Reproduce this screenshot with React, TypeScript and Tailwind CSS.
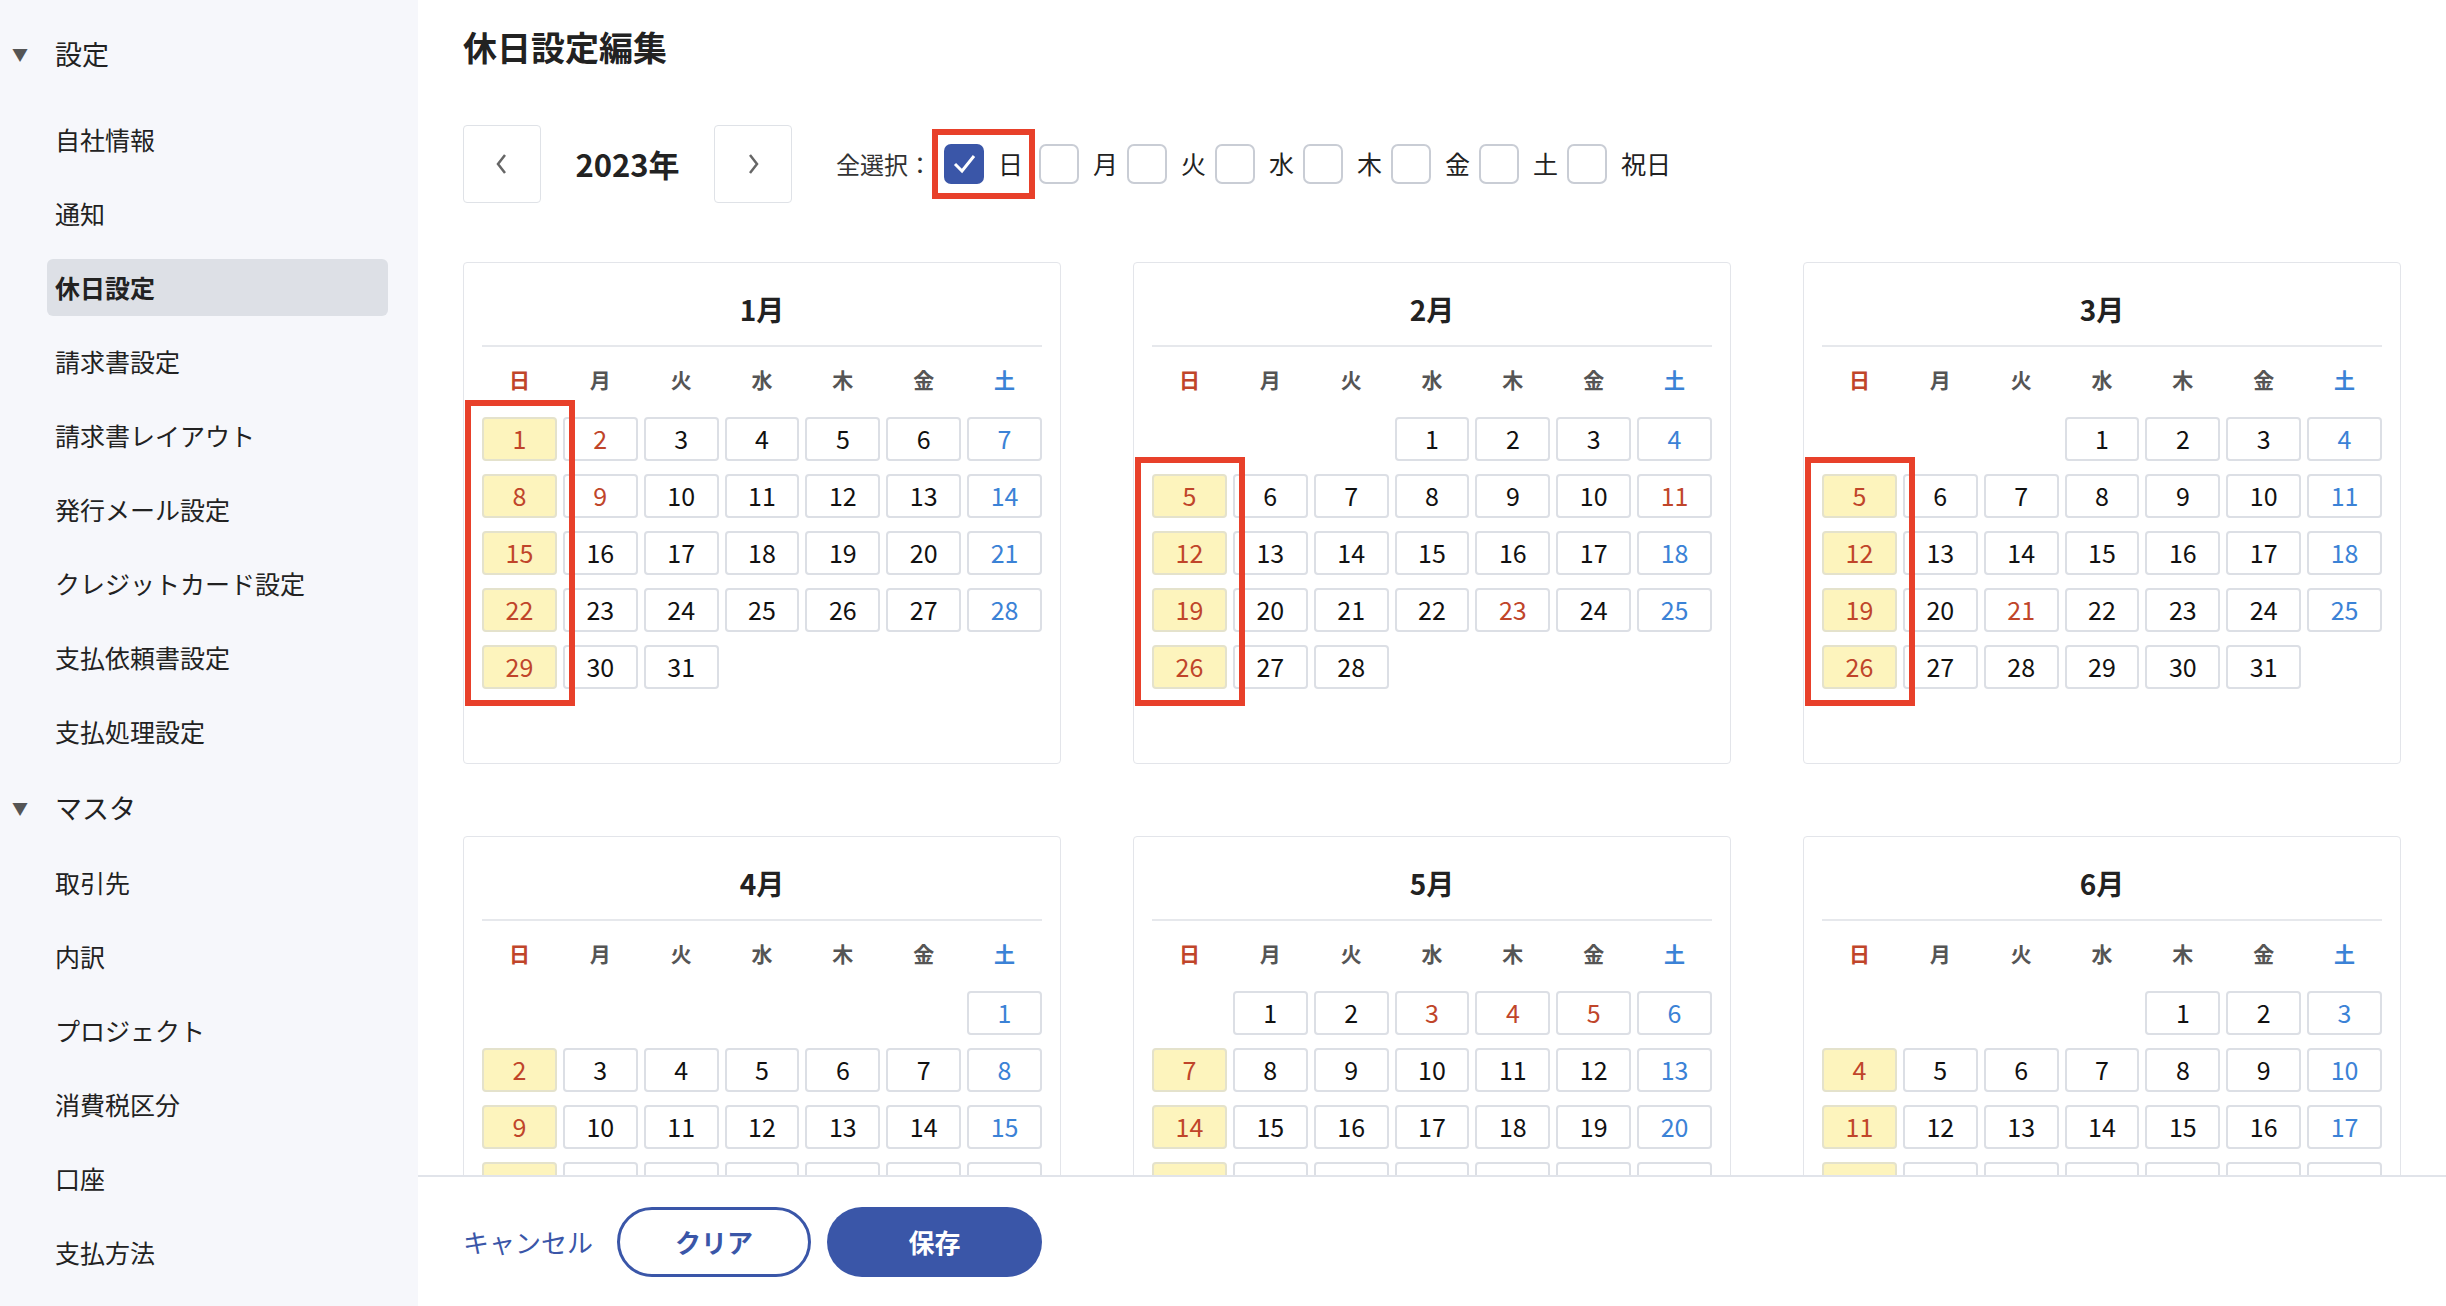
import React from "react";

const holidays: Record<string, number[]> = {
  "1": [1, 2, 9],
  "2": [11, 23],
  "3": [21],
  "4": [29],
  "5": [3, 4, 5],
  "6": [],
};

function Cal({ m, box }: { m: number; box: boolean }) {
  const first = new Date(2023, m - 1, 1).getDay();
  const days = new Date(2023, m, 0).getDate();
  const cells: (number | null)[] = [];
  for (let i = 0; i < first; i++) cells.push(null);
  for (let d = 1; d <= days; d++) cells.push(d);
  const rows = Math.ceil(cells.length / 7);
  const firstSunRow = first === 0 ? 0 : 1;
  const hol = holidays[String(m)] || [];
  const wd = ["日", "月", "火", "水", "木", "金", "土"];
  return (
    <div className="w-[598px] h-[502px] shrink-0 border border-[#e3e5ea] rounded-[4px] bg-white px-[18px]">
      <div className="h-[84px] pt-[10px] flex items-center justify-center text-[28px] font-bold text-[#222] border-b-2 border-[#e6e8ec]">
        {m}月
      </div>
      <div className="grid grid-cols-7 gap-x-[6px] h-[66px] items-center">
        {wd.map((w, i) => (
          <div
            key={w}
            className={`text-center text-[21px] font-bold ${i === 0 ? "text-[#c0452a]" : i === 6 ? "text-[#3b82d6]" : "text-[#555]"}`}
          >
            {w}
          </div>
        ))}
      </div>
      <div className="relative grid grid-cols-7 gap-x-[6px] gap-y-[13px] mt-[4px]">
        {box && (
          <div
            className="absolute border-[6px] border-[#e8402a] pointer-events-none"
            style={{
              left: -17,
              width: 110,
              top: firstSunRow * 57 - 17,
              height: (rows - firstSunRow) * 57 - 13 + 34,
            }}
          />
        )}
        {cells.map((d, i) => {
          if (d === null) return <div key={i} />;
          const dow = i % 7;
          const isSun = dow === 0;
          const isHol = hol.includes(d);
          const color = isSun || isHol ? "text-[#c0452a]" : dow === 6 ? "text-[#3b82d6]" : "text-[#111]";
          return (
            <div
              key={i}
              className={`h-[44px] flex items-center justify-center text-[25px] rounded-[4px] border-2 ${isSun ? "bg-[#fdf4bd] border-[#e4e2cc]" : "bg-white border-[#dcdfe5]"} ${color}`}
            >
              {d}
            </div>
          );
        })}
      </div>
    </div>
  );
}

export default function App() {
  const side1 = ["自社情報", "通知", "休日設定", "請求書設定", "請求書レイアウト", "発行メール設定", "クレジットカード設定", "支払依頼書設定", "支払処理設定"];
  const side2 = ["取引先", "内訳", "プロジェクト", "消費税区分", "口座", "支払方法"];
  const wds = ["月", "火", "水", "木", "金", "土", "祝日"];
  return (
    <div
      className="flex w-[2446px] h-[1306px] overflow-hidden bg-white text-[#222]"
      style={{ fontFamily: '"Noto Sans CJK JP", "Noto Sans", sans-serif' }}
    >
      <aside className="w-[418px] shrink-0 bg-[#f6f7fb] pt-[28px]">
        <div className="flex items-center h-[52px] pl-[12px]">
          <span className="text-[16px] text-[#555] w-[43px]">▼</span>
          <span className="text-[27px]">設定</span>
        </div>
        <div className="mt-[31px] flex flex-col gap-[17px]">
          {side1.map((s) => (
            <div
              key={s}
              className={`mx-[47px] mr-[30px] h-[57px] flex items-center px-[8px] rounded-[6px] text-[25px] ${s === "休日設定" ? "bg-[#dde0e6] font-bold" : ""}`}
            >
              {s}
            </div>
          ))}
        </div>
        <div className="flex items-center h-[52px] pl-[12px] mt-[22px]">
          <span className="text-[16px] text-[#555] w-[43px]">▼</span>
          <span className="text-[27px]">マスタ</span>
        </div>
        <div className="mt-[20px] flex flex-col gap-[17px]">
          {side2.map((s) => (
            <div key={s} className="mx-[47px] h-[57px] flex items-center px-[8px] text-[25px]">
              {s}
            </div>
          ))}
        </div>
      </aside>
      <main className="flex-1 flex flex-col min-w-0">
        <div className="flex-1 overflow-hidden pl-[45px] pt-[22px]">
          <h1 className="text-[34px] font-bold leading-[50px]">休日設定編集</h1>
          <div className="flex items-center mt-[53px] h-[78px]">
            <div className="w-[78px] h-[78px] border border-[#dfe2e7] rounded-[4px] flex items-center justify-center text-[#555]">
              <svg width="20" height="26" viewBox="0 0 20 26"><path d="M13 4 L6 13 L13 22" stroke="#666" strokeWidth="2.5" fill="none" /></svg>
            </div>
            <div className="w-[173px] text-center text-[31px] font-bold">2023年</div>
            <div className="w-[78px] h-[78px] border border-[#dfe2e7] rounded-[4px] flex items-center justify-center">
              <svg width="20" height="26" viewBox="0 0 20 26"><path d="M7 4 L14 13 L7 22" stroke="#666" strokeWidth="2.5" fill="none" /></svg>
            </div>
            <span className="ml-[44px] text-[24px] text-[#333]">全選択：</span>
            <div className="flex items-center border-[6px] border-[#e8402a] h-[70px] px-[6px]">
              <div className="w-[40px] h-[40px] rounded-[7px] bg-[#3a56a8] flex items-center justify-center">
                <svg width="28" height="28" viewBox="0 0 28 28"><path d="M5 14 L12 21 L24 6" stroke="white" strokeWidth="3" fill="none" /></svg>
              </div>
              <span className="ml-[14px] text-[25px]">日</span>
            </div>
            {wds.map((w) => (
              <div key={w} className="flex items-center ml-[4px]">
                <div className="w-[40px] h-[40px] rounded-[7px] border-2 border-[#c9cdd5] bg-white" />
                <span className="ml-[14px] mr-[5px] text-[25px]">{w}</span>
              </div>
            ))}
          </div>
          <div className="mt-[59px] flex flex-col gap-[72px]">
            <div className="flex gap-[72px]">
              <Cal m={1} box />
              <Cal m={2} box />
              <Cal m={3} box />
            </div>
            <div className="flex gap-[72px]">
              <Cal m={4} box={false} />
              <Cal m={5} box={false} />
              <Cal m={6} box={false} />
            </div>
          </div>
        </div>
        <footer className="h-[131px] shrink-0 border-t-2 border-[#e1e4ea] bg-white flex items-center pl-[45px]">
          <span className="text-[26px] text-[#3a56a8] mr-[24px]">キャンセル</span>
          <button className="w-[194px] h-[70px] rounded-full border-[3px] border-[#3a56a8] text-[#3a56a8] text-[26px] font-bold bg-white">クリア</button>
          <button className="ml-[16px] w-[215px] h-[70px] rounded-full bg-[#3a56a8] text-white text-[26px] font-bold">保存</button>
        </footer>
      </main>
    </div>
  );
}
